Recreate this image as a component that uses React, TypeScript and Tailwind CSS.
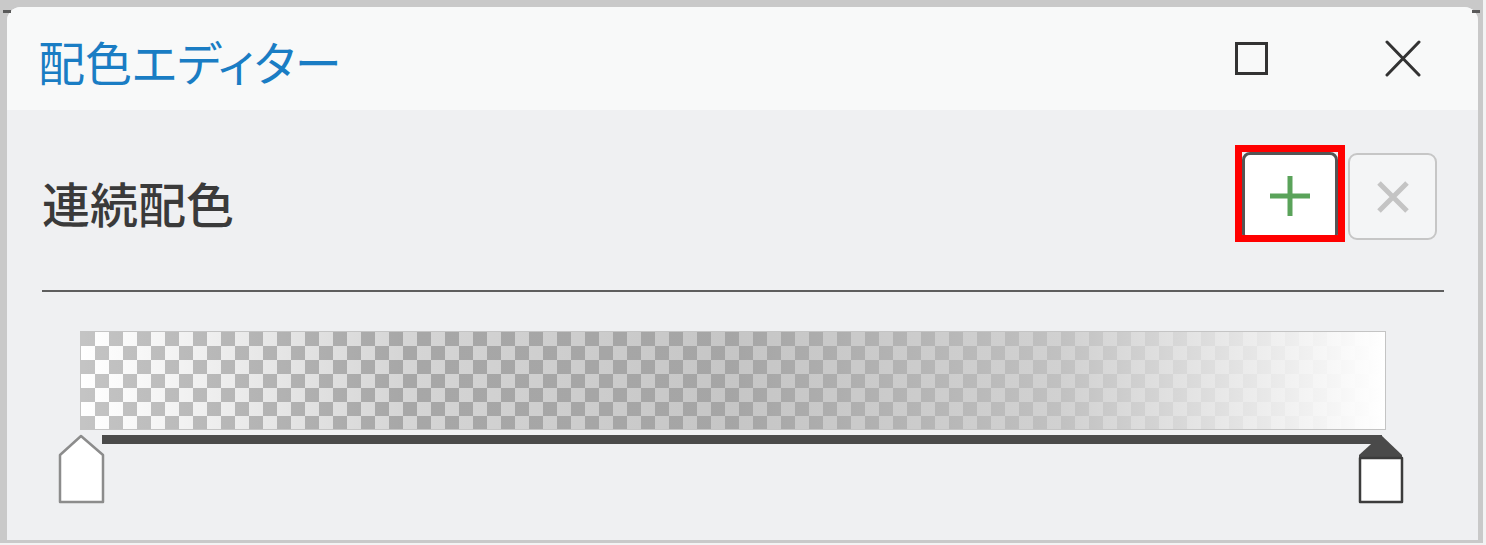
import React from "react";

const jp = "font-['Noto_Sans_CJK_JP','Noto_Sans',sans-serif]";

export default function App() {
  return (
    <div className="w-[1486px] h-[545px] bg-[#f3f3f3] overflow-hidden">
      <div className="relative w-[1483px] h-[543px] bg-[#c9c9c9] pl-[7px] pt-[7px] pr-[5px] pb-[3px]">
        <div className="absolute left-[3px] top-[10px] w-[8px] h-[3px] bg-[#5a5a5a]" />
        <div className="absolute left-[1472px] top-[10px] w-[8px] h-[3px] bg-[#5a5a5a]" />
        <div className="w-full h-full rounded-t-[14px] overflow-hidden flex flex-col bg-[#eff0f2]">
          {/* Header */}
          <div className="h-[103px] bg-[#f8f9f9] flex items-center justify-between pl-[31px] pr-[57px]">
            <div className={`${jp} text-[47px] leading-none text-[#1a7dc4] [font-feature-settings:'palt'] mt-[3px]`}>
              配色エディター
            </div>
            <div className="flex items-center gap-[117px]">
              <svg width="33" height="33" viewBox="0 0 33 33">
                <rect x="1.5" y="1.5" width="30" height="30" fill="none" stroke="#333" strokeWidth="3" />
              </svg>
              <svg width="36" height="37" viewBox="0 0 36 37">
                <path d="M2 2 L34 35 M34 2 L2 35" stroke="#333" strokeWidth="3" strokeLinecap="round" />
              </svg>
            </div>
          </div>
          {/* Body */}
          <div className="flex-1 pl-[35px] pr-[34px] pt-[35px]">
            <div className="flex justify-between items-start">
              <div className={`${jp} text-[48px] leading-none font-medium text-[#3a3a3a] mt-[33px]`}>
                連続配色
              </div>
              <div className="flex items-start mr-[7px]">
                <div className="w-[110px] h-[97px] relative">
                  <div className="absolute left-[7px] top-[7px] right-[7px] bottom-[0px] rounded-[8px] border-[3px] border-[#555555] bg-white flex items-center justify-center">
                    <svg width="42" height="42" viewBox="0 0 42 42" className="mb-[2px]">
                      <path d="M21 1 V41 M1 21 H41" stroke="#5aa35a" strokeWidth="5" />
                    </svg>
                  </div>
                  <div className="absolute inset-0 border-[7px] border-[#ff0000]" />
                </div>
                <div className="ml-[3px] mt-[8px] w-[89px] h-[87px] rounded-[9px] border-2 border-[#c6c6c6] bg-[#f4f5f6] flex items-center justify-center">
                  <svg width="34" height="34" viewBox="0 0 34 34">
                    <path d="M3 3 L31 31 M31 3 L3 31" stroke="#c4c4c4" strokeWidth="5" />
                  </svg>
                </div>
              </div>
            </div>
            <div className="mt-[48px] h-[2px] bg-[#5e5e5e]" />
            <div className="mt-[39px] ml-[13px] w-[1350px]">
              <div className="ml-[25px] w-[1306px] h-[99px] border border-[#c4c4c4] relative bg-[#c4c4c4]">
                <div className="absolute inset-0 [background:conic-gradient(#ffffff_25%,#c4c4c4_0_50%,#ffffff_0_75%,#c4c4c4_0)_0_0/28px_28px]" />
                <div className="absolute inset-0 bg-[linear-gradient(to_right,rgba(0,0,0,0)_0%,rgba(64,64,64,0.22)_25%,rgba(128,128,128,0.45)_50%,rgba(191,191,191,0.72)_75%,rgba(255,255,255,1)_100%)]" />
              </div>
              <svg width="1350" height="76" viewBox="0 0 1350 76" className="block">
                <rect x="47" y="5" width="1280" height="9" fill="#4a4a4a" />
                <path d="M26 6 L48 25 L48 72 L5 72 L5 25 Z" fill="#ffffff" stroke="#8c8c8c" strokeWidth="2.5" strokeLinejoin="round" />
                <path d="M1326 5 L1347 25 L1347 30 L1304 30 L1304 25 Z" fill="#4a4a4a" />
                <rect x="1305" y="28" width="42" height="44" fill="#ffffff" stroke="#3c3c3c" strokeWidth="2.5" strokeLinejoin="round" />
              </svg>
            </div>
          </div>
        </div>
      </div>
    </div>
  );
}
